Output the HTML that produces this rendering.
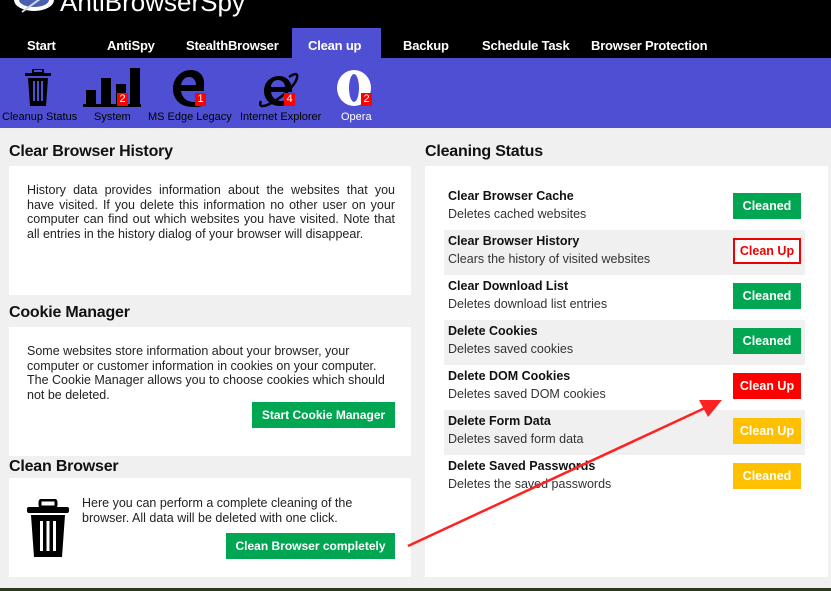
<!DOCTYPE html>
<html><head><meta charset="utf-8"><style>
*{margin:0;padding:0;box-sizing:border-box}
body{width:831px;height:591px;overflow:hidden;background:#eff0ef;font-family:"Liberation Sans",Arial,sans-serif;position:relative}
.abs{position:absolute}
#top{left:0;top:0;width:831px;height:58px;background:#000}
.nav{top:38px;color:#fff;font-weight:bold;font-size:13px;letter-spacing:-0.2px}
#bar{left:0;top:58px;width:831px;height:70px;background:#4f4fd3}
.lbl{top:111px;font-size:11px;color:#000;white-space:nowrap}
.badge{background:#f00;color:#fff;font-size:11px;width:11px;height:13px;line-height:13px;text-align:center}
h2{position:absolute;font-size:16px;font-weight:bold;color:#111;letter-spacing:-0.2px}
.box{position:absolute;background:#fff}
.p{position:absolute;font-size:12.5px;line-height:14.5px;color:#222}
.btn{position:absolute;color:#fff;font-weight:bold;font-size:12px;text-align:center;background:#00a651}
.row{position:absolute;left:444px;width:361px;height:45px}
.row.g{background:#eff0ef}
.row b{position:absolute;left:4px;top:4px;font-size:12.5px;color:#111}
.row span{position:absolute;left:4px;top:22px;font-size:12.5px;color:#333}
.row .btn{left:289px;top:8px;width:68px;height:26px;line-height:26px;font-size:12.5px}
</style></head><body>
<div id="top" class="abs"></div>
<svg class="abs" style="left:12px;top:0" width="48" height="14"><ellipse cx="22" cy="0" rx="20" ry="11" fill="#fff"/><ellipse cx="22" cy="0" rx="15" ry="7" fill="#4a5fb0"/><line x1="10" y1="12" x2="32" y2="-4" stroke="#cfd6ee" stroke-width="2"/></svg>
<div class="abs" style="left:60px;top:-13px;color:#fff;font-size:26px">AntiBrowserSpy</div>
<div class="abs" style="left:292px;top:28px;width:89px;height:30px;background:#4f4fd3"></div>
<div class="abs nav" style="left:27px">Start</div>
<div class="abs nav" style="left:107px">AntiSpy</div>
<div class="abs nav" style="left:186px">StealthBrowser</div>
<div class="abs nav" style="left:308px">Clean up</div>
<div class="abs nav" style="left:403px">Backup</div>
<div class="abs nav" style="left:482px">Schedule Task</div>
<div class="abs nav" style="left:591px">Browser Protection</div>
<div id="bar" class="abs"></div>
<svg class="abs" style="left:24px;top:69px" width="28" height="38" viewBox="0 0 28 38"><rect x="9" y="0" width="10" height="4" rx="1" fill="none" stroke="#000" stroke-width="2"/><rect x="1" y="4" width="26" height="3" fill="#000"/><path d="M4 9h20l-2 28H6z" fill="#000"/><rect x="9" y="12" width="2" height="20" fill="#4f4fd3"/><rect x="13" y="12" width="2" height="20" fill="#4f4fd3"/><rect x="17" y="12" width="2" height="20" fill="#4f4fd3"/></svg>
<div class="abs lbl" style="left:2px">Cleanup Status</div>
<svg class="abs" style="left:83px;top:68px" width="58" height="40"><rect x="3" y="22" width="10" height="16" fill="#000"/><rect x="18" y="10" width="10" height="28" fill="#000"/><rect x="33" y="16" width="10" height="22" fill="#000"/><rect x="47" y="0" width="10" height="38" fill="#000"/><rect x="0" y="36" width="58" height="3" fill="#000"/></svg>
<div class="abs badge" style="left:117px;top:93px">2</div>
<div class="abs lbl" style="left:94px">System</div>
<svg class="abs" style="left:171px;top:69px" width="36" height="38" viewBox="0 0 36 38"><path d="M33 22H10c1 7 6 11 13 11 4 0 8-1 10-3v6c-3 2-7 2-11 2C10 38 2 31 2 20 2 9 10 1 20 1c8 0 14 6 13 15z M10 16h15c0-5-3-8-7-8-4 0-7 3-8 8z" fill="#000" fill-rule="evenodd"/><path d="M2 18C4 8 12 3 20 4 12 4 6 10 4 18z" fill="#000"/></svg>
<div class="abs badge" style="left:195px;top:93px">1</div>
<div class="abs lbl" style="left:148px">MS Edge Legacy</div>
<svg class="abs" style="left:259px;top:71px" width="40" height="38" viewBox="0 0 40 38"><path d="M33 21H12c1 6 5 9 10 9 3 0 6-1 8-3h3c-2 5-7 8-12 8C12 35 5 29 5 20 5 11 12 5 20 5s13 6 13 14z M12 16h14c0-4-3-7-7-7s-7 3-7 7z" fill="#000" fill-rule="evenodd"/><path d="M30 6c6-4 9-4 8 1-1 5-10 16-24 24C4 37-1 36 2 30" fill="none" stroke="#000" stroke-width="2.5"/></svg>
<div class="abs badge" style="left:284px;top:93px">4</div>
<div class="abs lbl" style="left:240px">Internet Explorer</div>
<svg class="abs" style="left:336px;top:69px" width="38" height="38"><ellipse cx="18" cy="19" rx="17" ry="18" fill="#fff"/><ellipse cx="18" cy="19" rx="5" ry="14" fill="#4f4fd3"/></svg>
<div class="abs badge" style="left:361px;top:93px">2</div>
<div class="abs lbl" style="left:341px;color:#fff">Opera</div>

<h2 style="left:9px;top:143px">Clear Browser History</h2>
<div class="box" style="left:9px;top:166px;width:402px;height:129px"></div>
<div class="p" style="left:27px;top:183px;width:368px;text-align:justify">History data provides information about the websites that you have visited. If you delete this information no other user on your computer can find out which websites you have visited. Note that all entries in the history dialog of your browser will disappear.</div>

<h2 style="left:9px;top:304px">Cookie Manager</h2>
<div class="box" style="left:9px;top:327px;width:402px;height:129px"></div>
<div class="p" style="left:27px;top:344px;width:370px">Some websites store information about your browser, your computer or customer information in cookies on your computer. The Cookie Manager allows you to choose cookies which should not be deleted.</div>
<div class="btn" style="left:252px;top:402px;width:143px;height:26px;line-height:26px">Start Cookie Manager</div>

<h2 style="left:9px;top:458px">Clean Browser</h2>
<div class="box" style="left:9px;top:478px;width:402px;height:99px"></div>
<svg class="abs" style="left:27px;top:499px" width="42" height="58" viewBox="0 0 42 58"><rect x="13" y="1" width="16" height="7" rx="2" fill="none" stroke="#000" stroke-width="3"/><rect x="0" y="8" width="42" height="6" rx="2" fill="#000"/><path d="M4 16h34l-3 42H7z" fill="#000"/><rect x="13" y="22" width="3" height="30" fill="#fff"/><rect x="19.5" y="22" width="3" height="30" fill="#fff"/><rect x="26" y="22" width="3" height="30" fill="#fff"/></svg>
<div class="p" style="left:82px;top:496px;width:290px">Here you can perform a complete cleaning of the browser. All data will be deleted with one click.</div>
<div class="btn" style="left:226px;top:533px;width:169px;height:26px;line-height:26px">Clean Browser completely</div>

<h2 style="left:425px;top:143px">Cleaning Status</h2>
<div class="box" style="left:425px;top:166px;width:403px;height:411px"></div>
<div class="row" style="top:185px"><b>Clear Browser Cache</b><span>Deletes cached websites</span><div class="btn">Cleaned</div></div>
<div class="row g" style="top:230px"><b>Clear Browser History</b><span>Clears the history of visited websites</span><div class="btn" style="background:#fff;color:#e00;border:2px solid #e00;line-height:22px">Clean Up</div></div>
<div class="row" style="top:275px"><b>Clear Download List</b><span>Deletes download list entries</span><div class="btn">Cleaned</div></div>
<div class="row g" style="top:320px"><b>Delete Cookies</b><span>Deletes saved cookies</span><div class="btn">Cleaned</div></div>
<div class="row" style="top:365px"><b>Delete DOM Cookies</b><span>Deletes saved DOM cookies</span><div class="btn" style="background:#f00">Clean Up</div></div>
<div class="row g" style="top:410px"><b>Delete Form Data</b><span>Deletes saved form data</span><div class="btn" style="background:#ffc000">Clean Up</div></div>
<div class="row" style="top:455px"><b>Delete Saved Passwords</b><span>Deletes the saved passwords</span><div class="btn" style="background:#ffc000">Cleaned</div></div>

<div class="abs" style="left:0;top:588px;width:831px;height:3px;background:#2b3a1c"></div>
<svg class="abs" style="left:0;top:0" width="831" height="591"><line x1="408" y1="546" x2="705" y2="408" stroke="#f22" stroke-width="2.5"/><polygon points="722,400 699,400 708,417" fill="#f22"/></svg>
</body></html>
